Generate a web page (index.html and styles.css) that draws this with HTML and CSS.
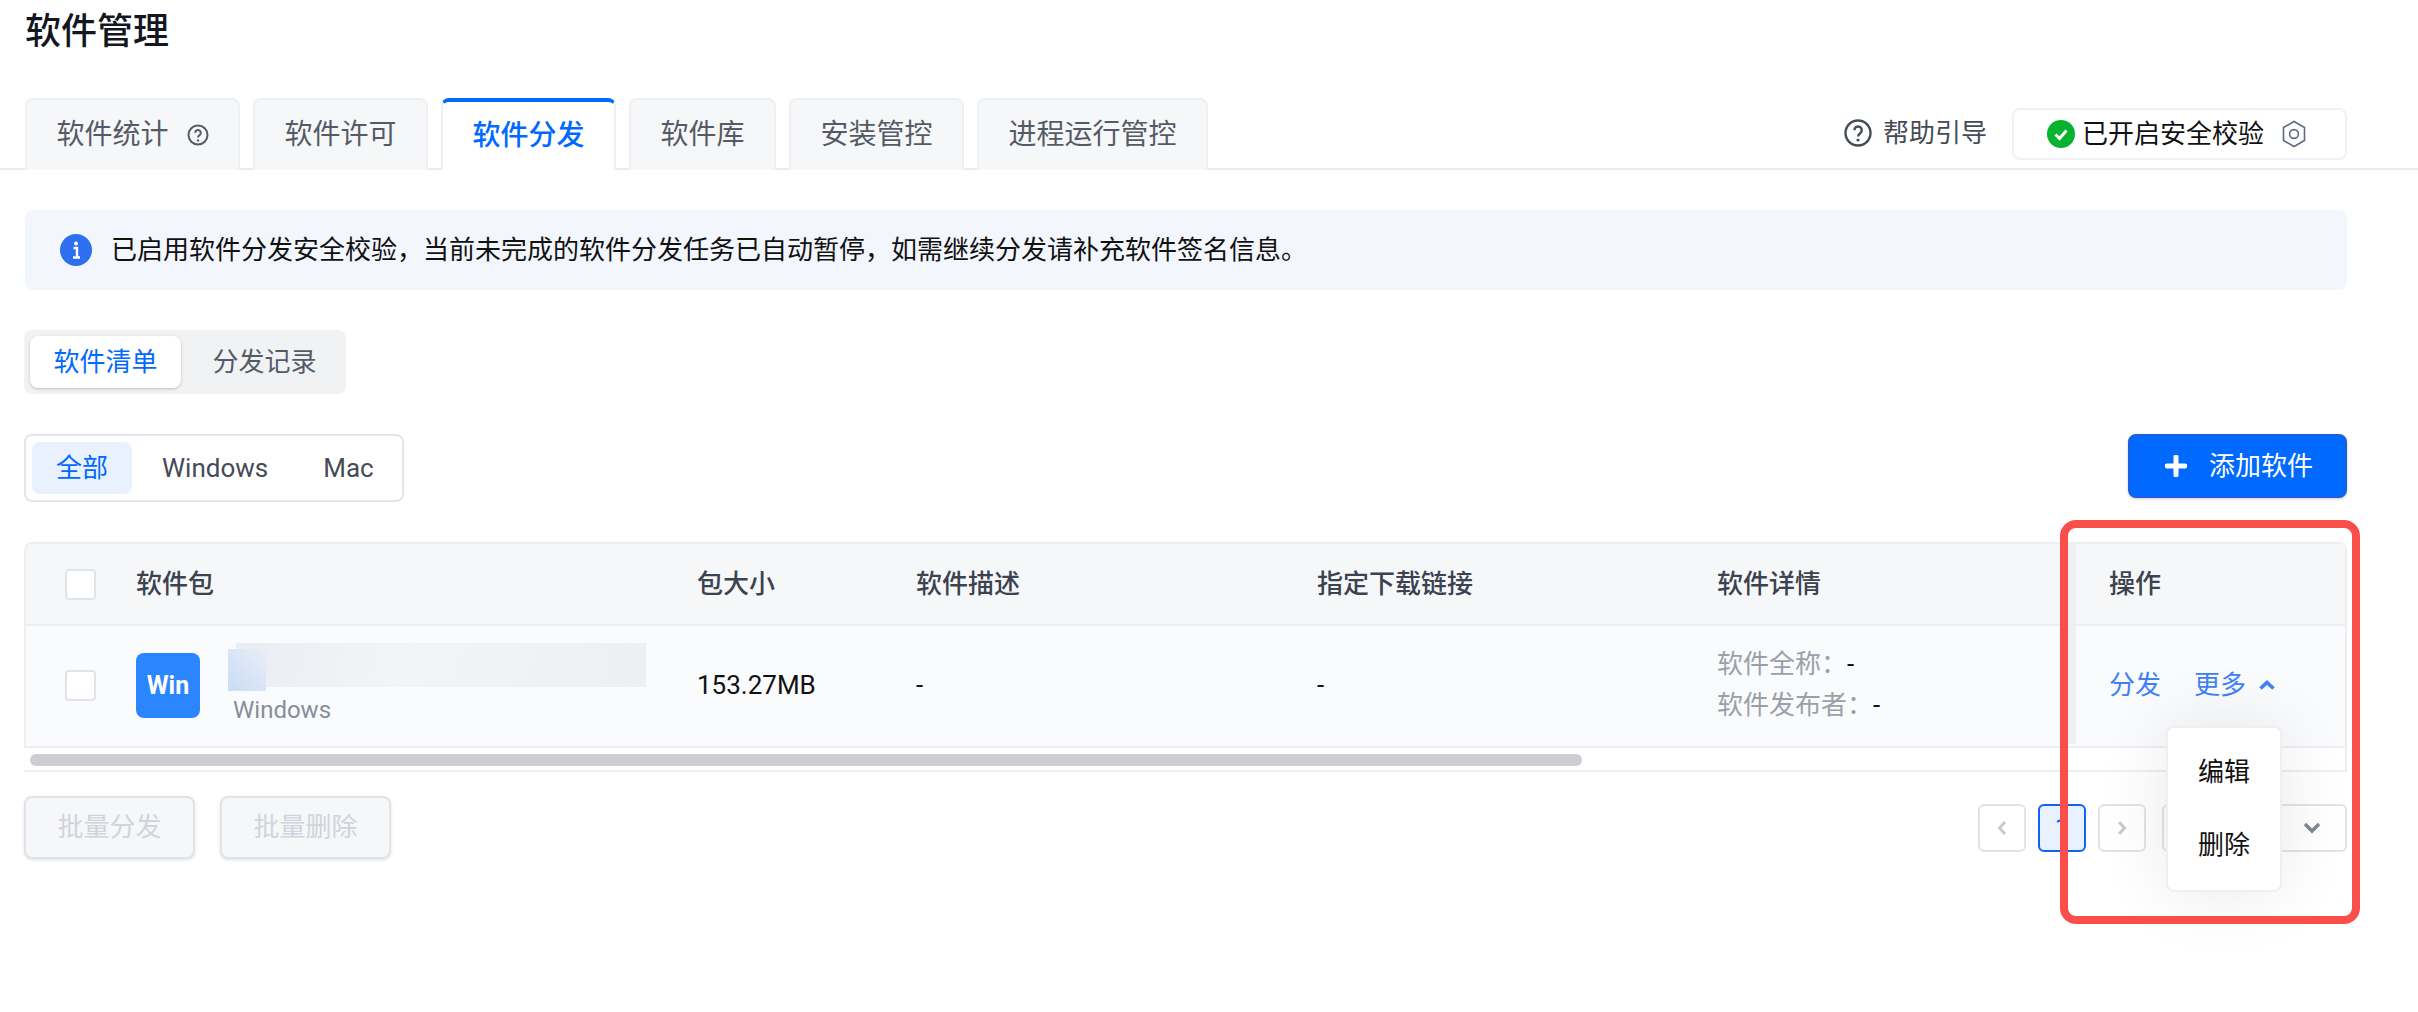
FILE: index.html
```html
<!DOCTYPE html>
<html lang="zh-CN">
<head>
<meta charset="utf-8">
<title>软件管理</title>
<link rel="stylesheet" href="styles.css">
</head>
<body>
<div class="page">
  <h1 class="title">软件管理</h1>
  <div class="tabbar">
    <div class="tab tab-first">软件统计
      <svg class="tab-help" viewBox="0 0 22 22"><circle cx="11" cy="11" r="9.5" fill="none" stroke="#555b66" stroke-width="2"/><path d="M8.2 8.8a2.8 2.8 0 1 1 4.4 2.3c-1 .7-1.6 1.2-1.6 2.4" fill="none" stroke="#555b66" stroke-width="2"/><circle cx="11" cy="16.4" r="1.2" fill="#555b66"/></svg>
    </div>
    <div class="tab">软件许可</div>
    <div class="tab tab-active">软件分发</div>
    <div class="tab">软件库</div>
    <div class="tab">安装管控</div>
    <div class="tab">进程运行管控</div>
    <div class="tools">
      <div class="help">
        <svg class="help-icon" viewBox="0 0 28 28"><circle cx="14" cy="14" r="12.5" fill="none" stroke="#454b57" stroke-width="2.4"/><path d="M10.4 11.2a3.7 3.7 0 1 1 5.8 3c-1.4 1-2.2 1.600-2.200 3.200" fill="none" stroke="#454b57" stroke-width="2.4"/><circle cx="14" cy="21" r="1.6" fill="#454b57"/></svg>
        <span>帮助引导</span>
      </div>
      <div class="secure">
        <svg class="secure-icon" viewBox="0 0 28 28"><circle cx="14" cy="14" r="14" fill="#06b32f"/><path d="M8.5 14.5l4 4 7-8" fill="none" stroke="#fff" stroke-width="3"/></svg>
        <span>已开启安全校验</span>
        <svg class="hex-icon" viewBox="0 0 24 28"><path d="M12 1.500l10.500 6v13l-10.500 6-10.500-6v-13z" fill="none" stroke="#5f6b80" stroke-width="1.6"/><circle cx="12" cy="14" r="4.400" fill="none" stroke="#5f6b80" stroke-width="1.6"/></svg>
      </div>
    </div>
  </div>

  <div class="content">
    <div class="notice">
      <svg class="notice-icon" viewBox="0 0 32 32"><circle cx="16" cy="16" r="16" fill="#2d6ff0"/><circle cx="16" cy="9.500" r="2" fill="#fff"/><path d="M13.500 14h3.500v9M13 23.500h7" fill="none" stroke="#fff" stroke-width="2.4"/></svg>
      <span>已启用软件分发安全校验，当前未完成的软件分发任务已自动暂停，如需继续分发请补充软件签名信息。</span>
    </div>

    <div class="segment">
      <div class="segment-item segment-on">软件清单</div>
      <div class="segment-item">分发记录</div>
    </div>

    <div class="toolbar">
      <div class="filter">
        <div class="filter-item filter-on">全部</div>
        <div class="filter-item">Windows</div>
        <div class="filter-item">Mac</div>
      </div>
      <div class="add">
        <svg class="add-icon" viewBox="0 0 22 22"><path d="M11 2v18M2 11h18" stroke="#fff" stroke-width="5" stroke-linecap="round"/></svg>
        <span>添加软件</span>
      </div>
    </div>

    <div class="table">
      <div class="row row-head">
        <div class="cell cell-check"><span class="check"></span></div>
        <div class="cell">软件包</div>
        <div class="cell">包大小</div>
        <div class="cell">软件描述</div>
        <div class="cell">指定下载链接</div>
        <div class="cell">软件详情</div>
        <div class="cell cell-op">操作</div>
      </div>
      <div class="row row-body">
        <div class="cell cell-check"><span class="check"></span></div>
        <div class="cell cell-pkg">
          <div class="win">Win</div>
          <div class="pkg-text">
            <div class="blurred"></div>
            <div class="pkg-os">Windows</div>
          </div>
        </div>
        <div class="cell">153.27MB</div>
        <div class="cell">-</div>
        <div class="cell">-</div>
        <div class="cell cell-detail">
          <div><span class="muted">软件全称：</span>-</div>
          <div><span class="muted">软件发布者：</span>-</div>
        </div>
        <div class="cell cell-op cell-actions">
          <span class="link">分发</span>
          <div class="more">
            <span class="link">更多</span>
            <svg class="more-chev" viewBox="0 0 16 10"><path d="M1.500 8.500L8 2.500l6.500 6" fill="none" stroke="#3f80f6" stroke-width="3.600"/></svg>
            <div class="menu">
              <div class="menu-item">编辑</div>
              <div class="menu-item">删除</div>
            </div>
          </div>
        </div>
      </div>
      <div class="scroll"><div class="thumb"></div></div>
    </div>

    <div class="footer">
      <div class="btn-off">批量分发</div>
      <div class="btn-off">批量删除</div>
      <div class="pager">
        <div class="page-btn"><svg class="page-chev" viewBox="0 0 10 16"><path d="M8 2L2.500 8 8 14" fill="none" stroke="#c6cad3" stroke-width="3"/></svg></div>
        <div class="page-btn page-on">1</div>
        <div class="page-btn"><svg class="page-chev" viewBox="0 0 10 16"><path d="M2 2l5.500 6L2 14" fill="none" stroke="#c6cad3" stroke-width="3"/></svg></div>
        <div class="page-size"><svg class="size-chev" viewBox="0 0 18 12"><path d="M2 2l7 7 7-7" fill="none" stroke="#7f8694" stroke-width="3.400"/></svg></div>
      </div>
    </div>
  </div>
  <div class="annotation"></div>
</div>
</body>
</html>
```

FILE: styles.css
```css
* { box-sizing: border-box; }
html, body { margin: 0; padding: 0; background: #fff; }
body {
  font-family: Roboto, "Noto Sans CJK SC", sans-serif;
  font-size: 26px;
  line-height: 36px;
  color: #111;
}
.page { position: relative; width: 2418px; height: 1012px; overflow: hidden; }

.title { margin: 0 0 36px; padding: 2px 0 0 25px; font-size: 36px; line-height: 60px; font-weight: 500; color: #14171f; }

.tabbar { display: flex; align-items: stretch; gap: 13px; height: 72px; padding: 0 71px 0 25px; border-bottom: 2px solid #e9ebef; }
.tab {
  display: flex; align-items: center; flex: none;
  height: 72px; padding: 0 29.5px;
  background: #f6f7f9; color: #555b66;
  border: 2px solid #eef0f3; border-bottom: 0; border-radius: 8px 8px 0 0;
  font-size: 28px;
}
.tab-first { gap: 18px; }
.tab-help { width: 22px; height: 22px; }
.tab-active { background: #fff; color: #0069ff; font-weight: 500; border-top: 4px solid #0069ff; z-index: 1; }

.tools { display: flex; align-items: center; gap: 25px; margin-left: auto; height: 70px; }
.help { display: flex; align-items: center; gap: 11px; color: #454b57; }
.help-icon { width: 28px; height: 28px; }
.secure { display: flex; align-items: center; width: 335px; height: 52px; padding-left: 33px; border: 2px solid #f0f1f4; border-radius: 8px; margin-top: 2px; }
.secure-icon { width: 28px; height: 28px; margin-right: 7px; }
.hex-icon { width: 24px; height: 28px; margin-left: 18px; }

.content { padding: 40px 71px 0 24px; }

.notice { display: flex; align-items: center; height: 80px; padding-left: 35px; margin-left: 1px; background: #f3f6fd; border-radius: 8px; }
.notice-icon { width: 32px; height: 32px; margin-right: 19px; }

.segment { display: flex; align-items: center; width: 322px; height: 64px; margin-top: 40px; padding: 0 6px; background: #f1f2f4; border-radius: 8px; }
.segment-item { width: 152px; height: 52px; line-height: 52px; text-align: center; color: #555b66; }
.segment-item + .segment-item { margin-left: 8px; }
.segment-on { background: #fff; color: #0069ff; border-radius: 8px; box-shadow: 0 1px 3px rgba(0, 0, 0, .22); }

.toolbar { display: flex; justify-content: space-between; align-items: flex-start; margin-top: 40px; }
.filter { display: flex; align-items: center; width: 380px; height: 68px; padding: 0 6px; border: 2px solid #e3e6ee; border-radius: 8px; }
.filter-item { flex: none; height: 52px; line-height: 52px; color: #454b57; }
.filter-on { width: 100px; margin-right: 30px; text-align: center; background: #e9f1fe; color: #0069ff; border-radius: 8px; }
.filter-item:nth-child(2) { margin-right: 55px; }
.add { display: flex; align-items: center; justify-content: center; gap: 22px; width: 219px; height: 64px; padding-left: 3px; background: #0069ff; border: 2px solid #1a5fe0; border-radius: 8px; color: #fff; box-shadow: 0 1px 3px rgba(0, 0, 0, .2); }
.add-icon { width: 22px; height: 22px; }

.table { margin-top: 40px; border-top: 2px solid #eceef1; border-right: 2px solid #eceef1; border-bottom: 2px solid #eceef1; border-top-left-radius: 8px; border-top-right-radius: 8px; }
.row { display: grid; grid-template-columns: 110px 561px 219px 401px 400px 359px 269px; border-left: 2px solid #eceef1; border-bottom: 2px solid #eceef1; }
.row-head { height: 82px; background: #f6f7f9; color: #3b4250; font-weight: 500; border-top-left-radius: 8px; }
.row-body { height: 122px; padding-bottom: 2px; background: #fafbfd; }
.cell { display: flex; align-items: center; }
.cell-check { padding-left: 39px; }
.check { display: block; width: 31px; height: 31px; background: #fff; border: 2px solid #dfe3ea; border-radius: 4px; }
.cell-pkg { gap: 28px; }
.win { width: 64px; height: 65px; line-height: 65px; text-align: center; background: #2b85ff; border-radius: 8px; color: #fff; font-size: 25px; font-weight: 700; }
.blurred {
  width: 418px; height: 48px;
  background:
    linear-gradient(45deg, #c9dcf7, #e9eef5) left bottom / 38px 42px no-repeat,
    linear-gradient(100deg, #e9edf4, #f3f4f6 40%, #eeeff1) right top / 410px 44px no-repeat;
}
.pkg-os { margin-top: 2px; padding-left: 5px; font-size: 24px; line-height: 34px; color: #868e9c; }
.cell-detail { flex-direction: column; align-items: flex-start; justify-content: center; line-height: 41px; }
.muted { color: #9aa0aa; }
.cell-op { padding-left: 33px; box-shadow: -8px 0 0 #eff0f3; }
.cell-actions { gap: 33px; }
.link { color: #3f80f6; }
.more { position: relative; display: flex; align-items: center; }
.more-chev { width: 16px; height: 10px; margin-left: 13px; }
.menu { position: absolute; top: 59px; left: -28px; z-index: 5; width: 116px; height: 166px; padding: 8px 0; background: #fff; border: 2px solid #eeeff3; border-radius: 8px; box-shadow: 0 0 70px rgba(0, 0, 0, .09); }
.menu-item { height: 73px; line-height: 73px; text-align: center; }
.scroll { height: 22px; padding: 6px 0 0 6px; }
.thumb { width: 1552px; height: 12px; background: #cbcdd1; border-radius: 6px; }

.footer { display: flex; align-items: flex-start; gap: 25px; margin-top: 24px; }
.btn-off { width: 171px; height: 63px; line-height: 59px; text-align: center; background: #f6f7f9; border: 2px solid #dfe3ea; border-radius: 8px; color: #d0d4dc; box-shadow: 0 1px 3px rgba(0, 0, 0, .12); }
.pager { display: flex; align-items: center; gap: 12px; margin: 8px 0 0 auto; }
.page-btn { display: flex; align-items: center; justify-content: center; width: 48px; height: 48px; border: 2px solid #e0e3ea; border-radius: 6px; }
.page-chev { width: 10px; height: 16px; }
.page-on { background: #e9f1fe; border-color: #0f62f2; color: #0069ff; }
.page-size { display: flex; align-items: center; justify-content: flex-end; width: 185px; height: 48px; margin-left: 4px; padding-right: 24px; border: 2px solid #e0e3ea; border-radius: 6px; }
.size-chev { width: 18px; height: 12px; }

.annotation { position: absolute; left: 2060px; top: 520px; z-index: 10; width: 300px; height: 404px; border: 8px solid #fa4e4b; border-radius: 16px; pointer-events: none; }
```
